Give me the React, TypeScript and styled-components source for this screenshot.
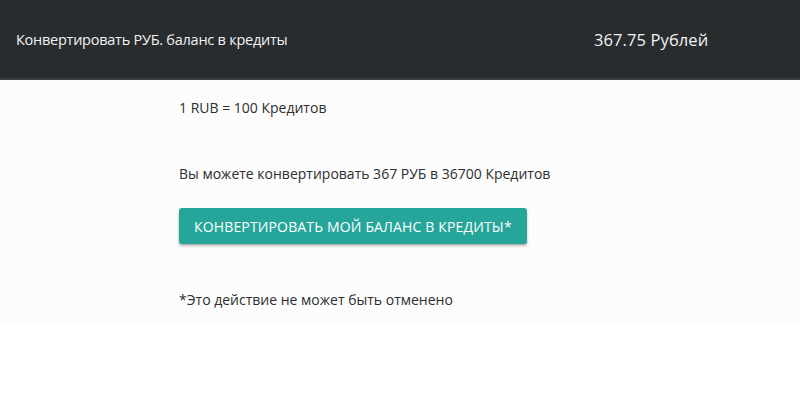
import React from "react";
import styled, { createGlobalStyle } from "styled-components";

const Global = createGlobalStyle`
  html, body { margin: 0; padding: 0; background: #ffffff; }
  body { font-family: "Open Sans", "Noto Sans", sans-serif; }
`;

const Header = styled.header`
  height: 78px;
  background: #292c2f;
  border-bottom: 2px solid #3c3f42;
  display: grid;
  grid-template-columns: 578px 1fr;
  align-items: center;
  padding: 0 16px;
  color: #f2f2f2;
`;

const Title = styled.div`
  font-size: 14.5px;
  letter-spacing: -0.25px;
`;

const Balance = styled.div`
  font-size: 16.5px;
  letter-spacing: 0.1px;
`;

const Main = styled.main`
  background: #fcfcfc;
  padding: 18px 0 13px 179px;
  display: flex;
  flex-direction: column;
  align-items: flex-start;
  color: #2e2e2e;
`;

const Text = styled.p<{ $gap?: number }>`
  margin: 0;
  margin-top: ${(p) => p.$gap ?? 0}px;
  font-size: 14px;
  line-height: 20px;
  letter-spacing: 0;
`;

const Button = styled.button`
  margin-top: 24px;
  height: 36px;
  padding: 0 15px;
  border: none;
  border-radius: 3px;
  background: #26a69a;
  color: #ffffff;
  font-family: "Open Sans", "Noto Sans", sans-serif;
  font-size: 14px;
  letter-spacing: 0.15px;
  text-transform: uppercase;
  box-shadow: 0 2px 3px rgba(0, 0, 0, 0.25), 0 1px 1px rgba(0, 0, 0, 0.12);
  cursor: pointer;
`;

export default function App() {
  return (
    <>
      <Global />
      <Header>
        <Title>Конвертировать РУБ. баланс в кредиты</Title>
        <Balance>367.75 Рублей</Balance>
      </Header>
      <Main>
        <Text>1 RUB = 100 Кредитов</Text>
        <Text $gap={46}>Вы можете конвертировать 367 РУБ в 36700 Кредитов</Text>
        <Button>Конвертировать мой баланс в кредиты*</Button>
        <Text $gap={46}>*Это действие не может быть отменено</Text>
      </Main>
    </>
  );
}
